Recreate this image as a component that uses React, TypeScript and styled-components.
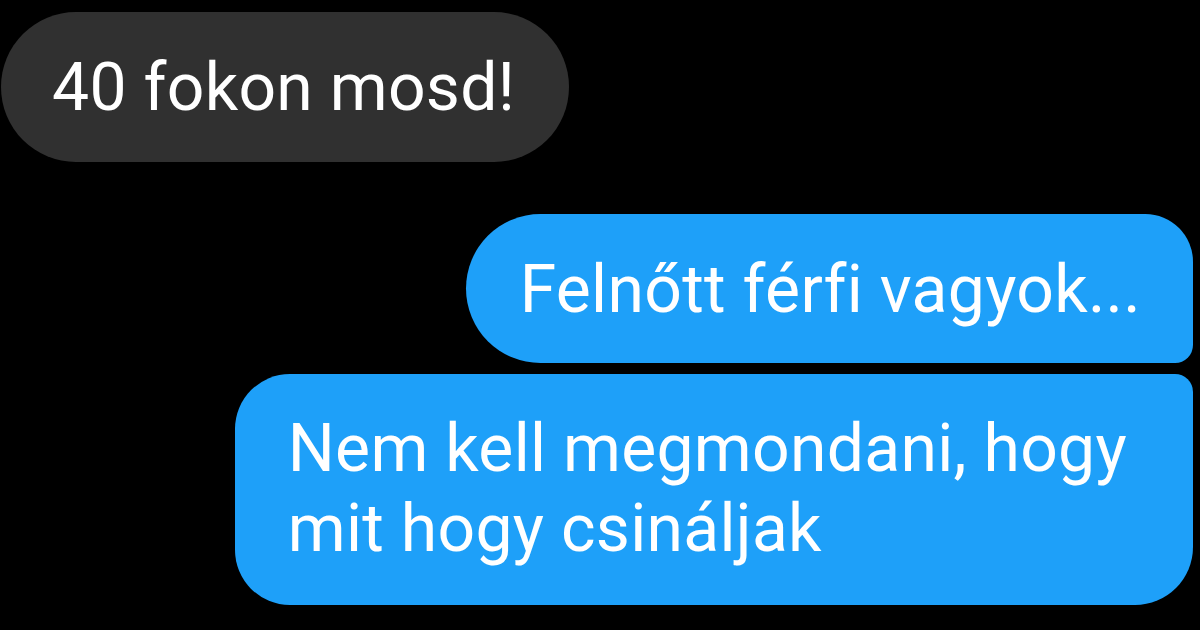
import React from "react";
import styled, { createGlobalStyle } from "styled-components";

const Global = createGlobalStyle`
  html, body {
    margin: 0;
    padding: 0;
    background: #000;
  }
  body {
    width: 1200px;
    height: 630px;
    overflow: hidden;
    font-family: Roboto, "Noto Sans", "Liberation Sans", sans-serif;
  }
`;

const Thread = styled.div`
  display: flex;
  flex-direction: column;
  width: 1200px;
  height: 630px;
  box-sizing: border-box;
  padding: 12px 7px 0 1px;
  background: #000;
`;

const Bubble = styled.div<{ $mine?: boolean; $gap: number; $shape: string; $pad: string }>`
  align-self: ${(p) => (p.$mine ? "flex-end" : "flex-start")};
  margin-top: ${(p) => p.$gap}px;
  box-sizing: border-box;
  background: ${(p) => (p.$mine ? "#1ea0f9" : "#303030")};
  color: #fff;
  border-radius: ${(p) => p.$shape};
  padding: ${(p) => p.$pad};
  font-size: 66px;
  line-height: 80px;
  font-weight: 400;
  letter-spacing: 0.3px;
`;

const Text = styled.span`
  display: block;
  white-space: pre-line;
`;

export default function App() {
  return (
    <>
      <Global />
      <Thread>
        <Bubble $gap={0} $shape="75px" $pad="36px 54px 34px 51px">
          <Text>40 fokon mosd!</Text>
        </Bubble>
        <Bubble $mine $gap={52} $shape="75px 48px 18px 75px" $pad="36px 52px 33px 54px">
          <Text>Felnőtt férfi vagyok...</Text>
        </Bubble>
        <Bubble $mine $gap={11} $shape="55px 18px 58px 55px" $pad="35px 66px 36px 53px">
          <Text>{"Nem kell megmondani, hogy\nmit hogy csináljak"}</Text>
        </Bubble>
      </Thread>
    </>
  );
}
